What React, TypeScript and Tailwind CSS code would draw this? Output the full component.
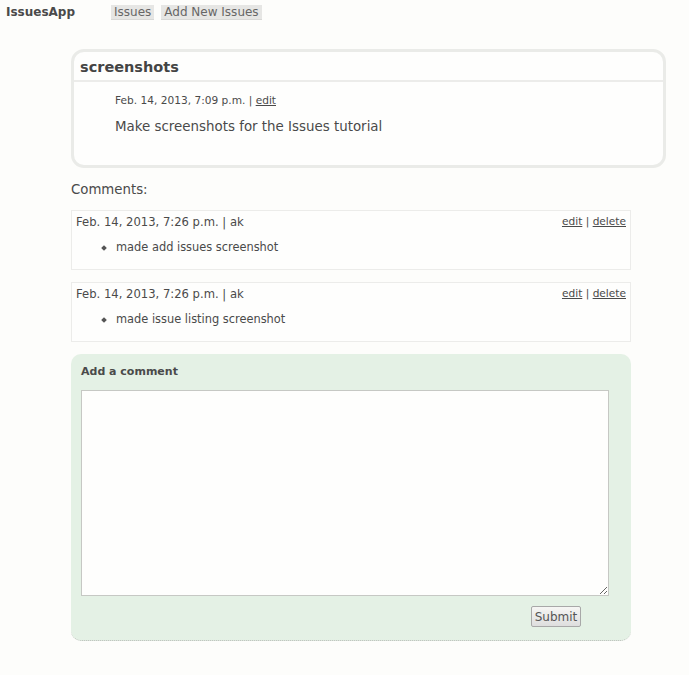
import React from 'react';

interface Comment {
  created: string;
  author: string;
  body: string;
}

const comments: Comment[] = [
  { created: 'Feb. 14, 2013, 7:26 p.m.', author: 'ak', body: 'made add issues screenshot' },
  { created: 'Feb. 14, 2013, 7:26 p.m.', author: 'ak', body: 'made issue listing screenshot' },
];

export default function App() {
  return (
    <div className="min-h-[675px] bg-[#fdfdfb] text-[#4a4a4a] font-['DejaVu_Sans',sans-serif]">
      {/* header */}
      <div className="flex items-center h-[24px] pl-[6px]">
        <span className="w-[105px] text-[12px] font-bold">IssuesApp</span>
        <nav className="flex gap-[7px] text-[12px] text-[#666]">
          <a className="px-[3px] h-[15px] leading-[15px] bg-[#e6e6e4] border-b border-[#d8d8d6]">Issues</a>
          <a className="px-[3px] h-[15px] leading-[15px] bg-[#e6e6e4] border-b border-[#d8d8d6]">Add New Issues</a>
        </nav>
      </div>

      <div className="ml-[71px] mt-[25px]">
        {/* issue */}
        <div className="w-[595px] h-[119px] border-[3px] border-[#eaebe8] rounded-[13px] bg-[#fefefd]">
          <h2 className="h-[30px] pl-[6px] pt-[6px] text-[14.5px] leading-[18px] font-bold text-[#444] border-b-2 border-[#ececea]">
            screenshots
          </h2>
          <div className="pl-[41px] pt-[11px] text-[10.6px]">
            Feb. 14, 2013, 7:09 p.m. | <a className="underline">edit</a>
          </div>
          <p className="pl-[41px] mt-[8px] text-[13.4px]">Make screenshots for the Issues tutorial</p>
        </div>

        {/* comments */}
        <div className="mt-[12px] text-[13.3px]">Comments:</div>
        <div className="mt-[10px] w-[560px] flex flex-col gap-[12px]">
          {comments.map((c, i) => (
            <div key={i} className="h-[60px] border border-[#ececea] bg-[#fefefd] pl-[4px] pr-[4px] pt-[3px]">
              <div className="flex justify-between items-start">
                <span className="text-[11.6px]">{c.created} | {c.author}</span>
                <span className="text-[10.6px] leading-[15px]">
                  <a className="underline">edit</a> | <a className="underline">delete</a>
                </span>
              </div>
              <div className="mt-[8px] pl-[26px] flex items-center gap-[10px] text-[11.4px]">
                <span className="w-[4px] h-[4px] rotate-45 bg-[#555]" />
                <span>{c.body}</span>
              </div>
            </div>
          ))}
        </div>

        {/* add comment form */}
        <form className="mt-[12px] w-[560px] h-[287px] bg-[#e4f1e5] rounded-[10px] border-b border-dotted border-[#b8bab6] px-[10px] pt-[10px]">
          <div className="text-[11px] font-bold">Add a comment</div>
          <textarea className="mt-[10px] block w-[528px] h-[206px] bg-[#fefefd] border border-[#c6c8c4] outline-none" />
          <div className="w-[500px] flex justify-end mt-[10px]">
            <button
              type="button"
              className="w-[50px] h-[21px] text-[12px] text-[#555] border border-[#a8a8a8] rounded-[2px] bg-gradient-to-b from-[#f6f6f4] to-[#dedede]"
            >
              Submit
            </button>
          </div>
        </form>
      </div>
    </div>
  );
}
